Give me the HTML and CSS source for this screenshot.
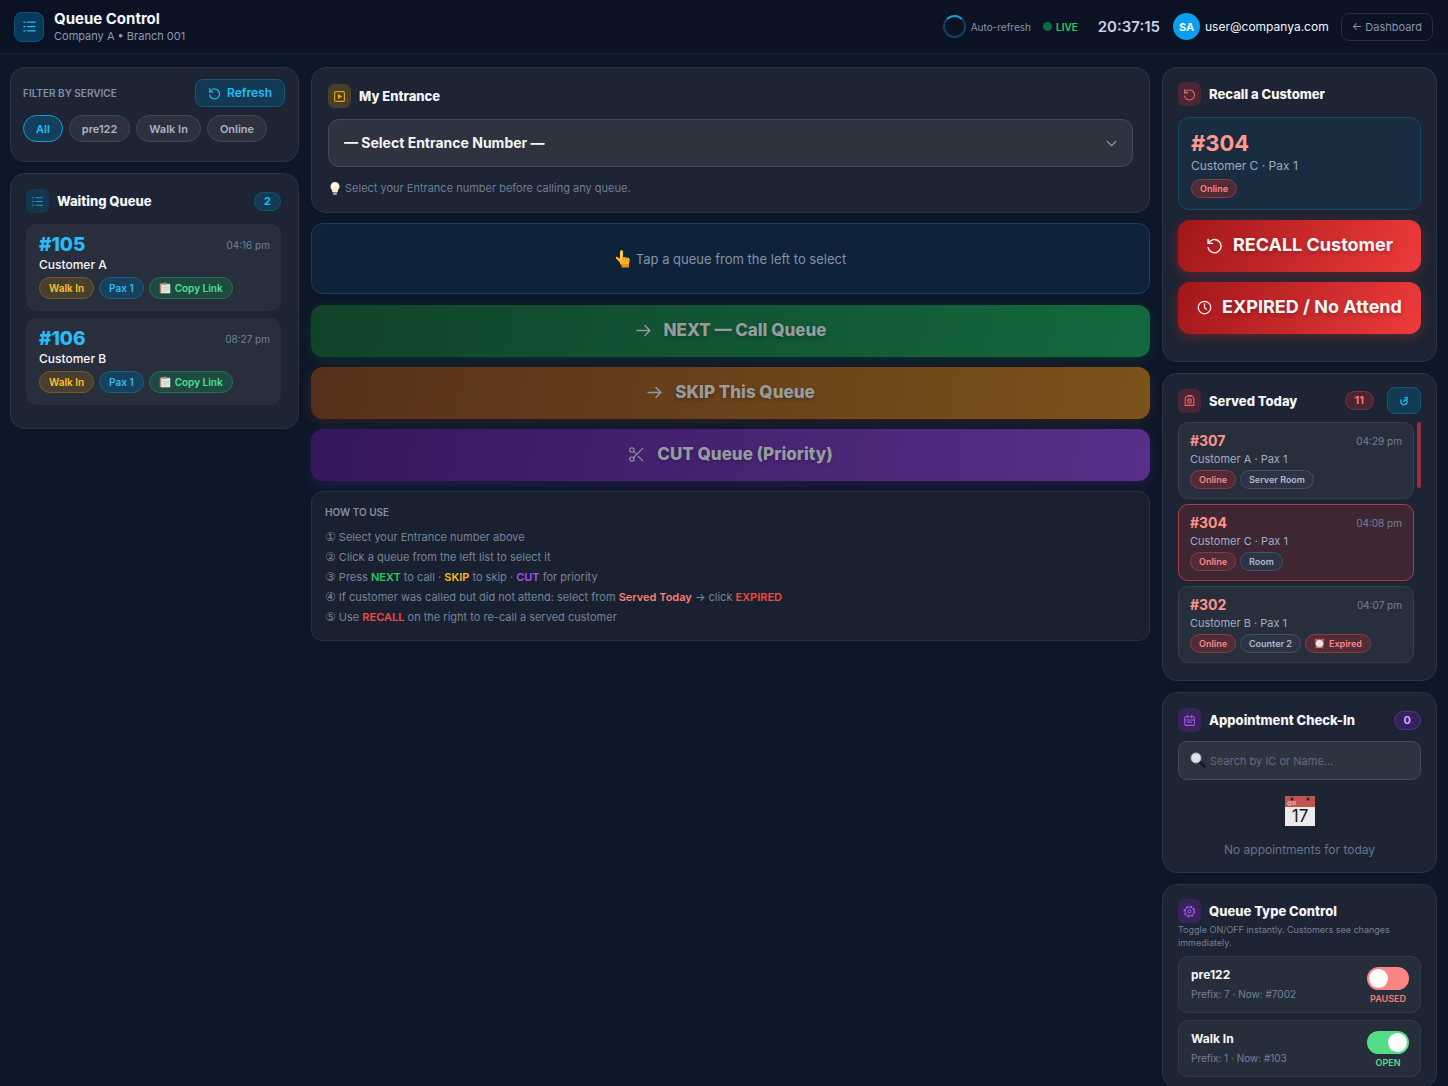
FILE: index.html
```html
<!DOCTYPE html>
<html lang="en">
<head>
<meta charset="utf-8">
<meta name="viewport" content="width=device-width, initial-scale=1">
<title>Queue Control</title>
<link rel="stylesheet" href="styles.css">
</head>
<body>
<svg class="defs" aria-hidden="true">
  <symbol id="i-list" viewBox="0 0 24 24"><path d="M9 5h12M9 12h12M9 19h12M3 5h2M3 12h2M3 19h2"/></symbol>
  <symbol id="i-undo" viewBox="0 0 24 24"><path d="M3 3v6h6"/><path d="M3.500 9a9.300 9.300 0 1 1-.6 6"/></symbol>
  <symbol id="i-arrow" viewBox="0 0 24 24"><path d="M3 12h18M14 5l7 7-7 7"/></symbol>
  <symbol id="i-clock" viewBox="0 0 24 24"><circle cx="12" cy="12" r="10"/><path d="M12 6v6l3 3"/></symbol>
  <symbol id="i-cut" viewBox="0 0 24 24"><circle cx="5.500" cy="5.500" r="3"/><circle cx="5.500" cy="18.500" r="3"/><path d="M21 3 8 16.500M8 7.500l4 4.500M14.500 14.500 21 21"/></symbol>
  <symbol id="i-clip" viewBox="0 0 16 16"><path fill="#b98a6a" d="M1 2h13v13H1z"/><path fill="#dfe9e4" d="M3 3h12v12H3z"/><path fill="#8d9a98" d="M5 1h5v3H5z"/><path stroke="#b9c9c4" d="M5 7h8M5 9.500h8M5 12h6"/></symbol>
</svg>

<header class="topbar">
  <span class="logo"><svg class="icon s15"><use href="#i-list"/></svg></span>
  <div class="brand">
    <h1>Queue Control</h1>
    <p>Company A • Branch 001</p>
  </div>
  <div class="status">
    <span class="spinner"></span>
    <span class="auto">Auto-refresh</span>
    <span class="live">LIVE</span>
    <time class="clock">20:37:15</time>
    <span class="avatar">SA</span>
    <span class="email">user@companya.com</span>
    <a class="back" href="#">← Dashboard</a>
  </div>
</header>

<main class="board">
  <div class="column">
    <section class="card filter">
      <div class="filter-head">
        <h2 class="label">FILTER BY SERVICE</h2>
        <button class="refresh"><svg class="icon s13"><use href="#i-undo"/></svg>Refresh</button>
      </div>
      <div class="chips">
        <button class="chip active">All</button>
        <button class="chip">pre122</button>
        <button class="chip">Walk In</button>
        <button class="chip">Online</button>
      </div>
    </section>

    <section class="card waiting">
      <div class="head">
        <span class="badge blue"><svg class="icon s13"><use href="#i-list"/></svg></span>
        <h2>Waiting Queue</h2>
        <span class="count blue">2</span>
      </div>
      <ul class="stack wide">
        <li class="ticket">
          <div class="row"><strong class="number">#105</strong><time>04:16 pm</time></div>
          <p>Customer A</p>
          <div class="tags"><span class="tag amber">Walk In</span><span class="tag blue">Pax 1</span><button class="tag green"><svg class="emoji"><use href="#i-clip"/></svg>Copy Link</button></div>
        </li>
        <li class="ticket">
          <div class="row"><strong class="number">#106</strong><time>08:27 pm</time></div>
          <p>Customer B</p>
          <div class="tags"><span class="tag amber">Walk In</span><span class="tag blue">Pax 1</span><button class="tag green"><svg class="emoji"><use href="#i-clip"/></svg>Copy Link</button></div>
        </li>
      </ul>
    </section>
  </div>

  <div class="column center">
    <section class="card entrance">
      <div class="head">
        <span class="badge amber"><svg class="icon s13" viewBox="0 0 24 24"><rect x="3" y="3" width="18" height="18" rx="2"/><path fill="currentColor" stroke="none" d="M9 7l8 5-8 5z"/></svg></span>
        <h2><label for="entrance">My Entrance</label></h2>
      </div>
      <div class="select">
        <select id="entrance"><option>— Select Entrance Number —</option></select>
        <svg class="icon s13" viewBox="0 0 24 24"><path d="M4 8l8 8 8-8"/></svg>
      </div>
      <p class="hint"><svg class="bulb" viewBox="0 0 14 16"><path fill="#fff1cf" d="M7 1a5 5 0 0 0-3 8.800V12h6V9.800A5 5 0 0 0 7 1z"/><path fill="#fff" d="M7 2a4 4 0 0 0-3 5 4 4 0 0 1 6-1A4 4 0 0 0 7 2z"/><path fill="#b39a80" d="M5 12h4v3H5z"/></svg>Select your Entrance number before calling any queue.</p>
    </section>

    <div class="prompt">
      <svg class="hand" viewBox="0 0 16 18"><path fill="#fdb827" d="M5 1.500a1.500 1.500 0 0 1 3 0V7l5 .8c1.300.3 1.800 1 1.700 2.200L14 14v1H6L4.500 12 1 8.500C.5 7.500 1.500 6.500 2.500 7L5 8.500z"/><path fill="#ffd55e" d="M5.500 2a1 1 0 0 1 1.500 0v7H5.500z"/><path stroke="#e08b12" fill="none" d="M8 7v3M10.500 8v2M12.500 8.500V11"/><path fill="#f08a1c" d="M6.500 14H14v3.500H6.500z"/></svg>
      Tap a queue from the left to select
    </div>

    <button class="action next" disabled><svg class="icon s17"><use href="#i-arrow"/></svg>NEXT — Call Queue</button>
    <button class="action skip" disabled><svg class="icon s17"><use href="#i-arrow"/></svg>SKIP This Queue</button>
    <button class="action cut" disabled><svg class="icon s17 thin"><use href="#i-cut"/></svg>CUT Queue (Priority)</button>

    <section class="howto">
      <h2 class="label">HOW TO USE</h2>
      <p><span class="step">①</span> Select your Entrance number above</p>
      <p><span class="step">②</span> Click a queue from the left list to select it</p>
      <p><span class="step">③</span> Press <b class="c-green">NEXT</b> to call · <b class="c-amber">SKIP</b> to skip · <b class="c-purple">CUT</b> for priority</p>
      <p><span class="step">④</span> If customer was called but did not attend: select from <b class="c-rose">Served Today</b> → click <b class="c-red">EXPIRED</b></p>
      <p><span class="step">⑤</span> Use <b class="c-red">RECALL</b> on the right to re-call a served customer</p>
    </section>
  </div>

  <div class="column">
    <section class="card recall">
      <div class="head">
        <span class="badge red"><svg class="icon s13"><use href="#i-undo"/></svg></span>
        <h2>Recall a Customer</h2>
      </div>
      <div class="selected">
        <strong>#304</strong>
        <p>Customer C · Pax 1</p>
        <div class="tags"><span class="tag small red">Online</span></div>
      </div>
      <button class="action danger"><svg class="icon s17"><use href="#i-undo"/></svg>RECALL Customer</button>
      <button class="action danger"><svg class="icon s15"><use href="#i-clock"/></svg>EXPIRED / No Attend</button>
    </section>

    <section class="card served">
      <div class="head">
        <span class="badge red"><svg class="icon s13" viewBox="0 0 24 24"><path d="M4 21V8q0-3 4-4h8q4 1 4 4v13zM8 3h8"/><rect x="9" y="9" width="6" height="8" rx="2"/><path d="M11 13h3"/></svg></span>
        <h2>Served Today</h2>
        <span class="count red">11</span>
        <button class="reload" aria-label="Reload served list"><svg class="icon s10" viewBox="0 0 16 16"><path d="M3 6v4q1 4 5 4 5-1 5-5 0-3-3-3L7 9M9 3l4-1v4"/></svg></button>
      </div>
      <div class="scroll">
        <ul class="stack">
          <li class="visit">
            <div class="row"><strong>#307</strong><time>04:29 pm</time></div>
            <p>Customer A · Pax 1</p>
            <div class="tags"><span class="tag small red">Online</span><span class="tag small gray">Server Room</span></div>
          </li>
          <li class="visit current">
            <div class="row"><strong>#304</strong><time>04:08 pm</time></div>
            <p>Customer C · Pax 1</p>
            <div class="tags"><span class="tag small red">Online</span><span class="tag small gray">Room</span></div>
          </li>
          <li class="visit">
            <div class="row"><strong>#302</strong><time>04:07 pm</time></div>
            <p>Customer B · Pax 1</p>
            <div class="tags"><span class="tag small red">Online</span><span class="tag small gray">Counter 2</span><span class="tag small red"><svg class="alarm" viewBox="0 0 12 12"><path stroke="#e2554f" stroke-width="2" d="M1 3l2-2M11 3 9 1M2 11l2-2M10 11 8 9"/><circle cx="6" cy="6" r="4.500" fill="#e9e4e4" stroke="#c9605c"/></svg>Expired</span></div>
          </li>
        </ul>
        <span class="thumb"></span>
      </div>
    </section>

    <section class="card appointments">
      <div class="head">
        <span class="badge purple"><svg class="icon s13" viewBox="0 0 24 24"><rect x="3" y="5" width="18" height="16" rx="2"/><path d="M3 11h18M8 2v5M16 2v5M8 15h8"/></svg></span>
        <h2>Appointment Check-In</h2>
        <span class="count purple">0</span>
      </div>
      <label class="search">
        <svg class="lens" viewBox="0 0 16 16"><path stroke="#15171c" stroke-width="2.500" stroke-linecap="round" d="M10 10l4.500 4.500"/><circle cx="6" cy="6" r="5" fill="#dfe3e8" stroke="#a9afb8"/></svg>
        <input type="search" placeholder="Search by IC or Name..." aria-label="Search by IC or Name">
      </label>
      <div class="empty">
        <svg class="calendar" viewBox="0 0 30 30"><path fill="#ecebea" d="M0 0h30v30H0z"/><path fill="#c25450" d="M0 0h30v11H0z"/><circle cx="7" cy="3" r="1.500" fill="#2a2030"/><circle cx="23" cy="3" r="1.500" fill="#2a2030"/><path stroke="#e7c4c2" fill="none" d="M3 9V6h3v3zM8 9V5M10 9V5"/><text x="15" y="26" text-anchor="middle">17</text></svg>
        <p>No appointments for today</p>
      </div>
    </section>

    <section class="card control">
      <div class="head">
        <span class="badge purple"><svg class="icon s13" viewBox="0 0 24 24"><circle cx="12" cy="12" r="3"/><circle cx="12" cy="12" r="8"/><circle cx="12" cy="12" r="10" stroke-dasharray="3 4.850"/></svg></span>
        <h2>Queue Type Control</h2>
      </div>
      <p class="note">Toggle ON/OFF instantly. Customers see changes immediately.</p>
      <ul class="stack wide">
        <li class="type">
          <div><label for="t-pre">pre122</label><p>Prefix: 7 · Now: #7002</p></div>
          <div class="toggle"><input type="checkbox" id="t-pre"><span class="c-rose">PAUSED</span></div>
        </li>
        <li class="type">
          <div><label for="t-walk">Walk In</label><p>Prefix: 1 · Now: #103</p></div>
          <div class="toggle"><input type="checkbox" id="t-walk" checked><span class="c-mint">OPEN</span></div>
        </li>
      </ul>
    </section>
  </div>
</main>
</body>
</html>
```
FILE: styles.css
```css
* { box-sizing: border-box; }

body {
  margin: 0;
  height: 100vh;
  display: flex;
  flex-direction: column;
  overflow: hidden;
  background: #0d1729;
  color: #f4f6fa;
  font: 12px/16px Inter, "Open Sans", sans-serif;
}

h1, h2, p, ul { margin: 0; padding: 0; }
ul { list-style: none; }
button, select, input { font: inherit; color: inherit; margin: 0; }
button { cursor: pointer; border: 1px solid transparent; }
.defs { position: absolute; width: 0; height: 0; }

.icon {
  flex: none;
  fill: none;
  stroke: currentColor;
  stroke-width: 2;
  stroke-linecap: round;
  stroke-linejoin: round;
}
.s10 { width: 10px; height: 10px; }
.s13 { width: 13px; height: 13px; }
.s15 { width: 15px; height: 15px; }
.s17 { width: 17px; height: 17px; }
.thin { stroke-width: 1.5; }

/* Top bar */
.topbar {
  flex: none;
  display: flex;
  align-items: center;
  height: 54px;
  padding: 0 15px 0 14px;
  background: #0a1223;
  border-bottom: 1px solid #10253c;
}
.logo {
  display: grid;
  place-items: center;
  width: 30px;
  height: 30px;
  margin-right: 10px;
  border: 1px solid #0f557c;
  border-radius: 8px;
  background: #07395a;
  color: #22bdf5;
}
.brand h1 { font-size: 15px; line-height: 18px; font-weight: 700; }
.brand p { font-size: 11px; line-height: 16px; color: #8c9ab1; }
.status { display: flex; align-items: center; margin-left: auto; }
.spinner {
  width: 23px;
  height: 23px;
  margin-right: 5px;
  border: 2px solid #0c4267;
  border-top-color: #1c9fd8;
  border-radius: 50%;
}
.auto { font-size: 10px; color: #8794aa; }
.live {
  display: flex;
  align-items: center;
  gap: 4px;
  margin: 0 20px 0 12px;
  font-size: 10px;
  font-weight: 600;
  color: #22d566;
}
.live::before { content: ""; width: 9px; height: 9px; border-radius: 50%; background: #106b3c; }
.clock { font-size: 15px; font-weight: 600; color: #c8d2e6; }
.avatar {
  display: grid;
  place-items: center;
  width: 27px;
  height: 27px;
  margin: 0 5px 0 13px;
  border-radius: 50%;
  background: #08a0ea;
  font-size: 11px;
  font-weight: 700;
}
.back {
  margin-left: 12px;
  padding: 5px 10px;
  border: 1px solid #262e40;
  border-radius: 8px;
  font-size: 11px;
  color: #8996ab;
  text-decoration: none;
}

/* Board columns */
.board {
  flex: 1;
  min-height: 0;
  display: grid;
  grid-template-columns: 289px minmax(0, 1fr) 275px;
  gap: 12px;
  padding: 13px 11px 0 10px;
}
.column { display: flex; flex-direction: column; gap: 11px; }
.column > * { flex: none; }
.center { gap: 10px; }

.card {
  border: 1px solid #2c3444;
  border-radius: 15px;
  padding: 15px 16px;
  background: #1d2433;
}
.head { display: flex; align-items: center; gap: 8px; }
.head h2 { flex: 1; font-size: 13px; line-height: 18px; font-weight: 800; }
.badge {
  display: grid;
  place-items: center;
  width: 23px;
  height: 24px;
  border-radius: 6px;
}
.badge.blue { background: #14374f; color: #1c9ccc; }
.badge.amber { background: #493c29; color: #e0a912; }
.badge.red { background: #4a2533; color: #ee6460; }
.badge.purple { background: #39235b; color: #9a55e8; }

.count {
  padding: 0 9px;
  border: 1px solid;
  border-radius: 10px;
  font-size: 11px;
  line-height: 17px;
  font-weight: 700;
}
.count.blue { background: #123b56; border-color: #145173; color: #27bdf5; }
.count.red { background: #482633; border-color: #7d2f3a; color: #fa7470; }
.count.purple { background: #36205e; border-color: #51308a; color: #d5aaff; }

.label { font-size: 10px; line-height: 16px; font-weight: 600; color: #8190a7; }

/* Filter */
.filter { padding: 11px 13px 19px 12px; }
.filter-head { display: flex; align-items: center; justify-content: space-between; }
.refresh {
  display: flex;
  align-items: center;
  gap: 6px;
  height: 28px;
  padding: 0 12px;
  border-color: #12567a;
  border-radius: 8px;
  background: #133a54;
  color: #27bdf5;
  font-weight: 600;
}
.chips { display: flex; gap: 6px; margin-top: 8px; }
.chip {
  height: 27px;
  padding: 0 12px;
  border-color: #414653;
  border-radius: 14px;
  background: #2d313d;
  color: #a9b4c7;
  font-size: 11px;
  font-weight: 600;
}
.chip.active { border-color: #1b9cd4; background: #12405d; color: #26bdf7; }

/* Tickets */
.stack { display: flex; flex-direction: column; gap: 5px; }
.stack.wide { gap: 7px; }
.row { display: flex; justify-content: space-between; align-items: center; }
.row time { font-size: 10px; color: #728097; }
.waiting { padding: 15px 17px 23px 15px; }
.waiting .head { padding-bottom: 11px; }
.ticket {
  height: 87px;
  padding: 10px 11px 0 13px;
  border-radius: 10px;
  background: #282e3b;
}
.number { font-size: 19px; line-height: 22px; font-weight: 800; color: #28bdfa; }
.ticket p { font-weight: 500; line-height: 18px; }

.tags { display: flex; gap: 5px; }
.tag {
  display: inline-flex;
  align-items: center;
  gap: 4px;
  height: 22px;
  margin-top: 3px;
  padding: 0 9px;
  border: 1px solid;
  border-radius: 11px;
  font-size: 10px;
  font-weight: 600;
}
.tag.small { height: 19px; margin-top: 2px; padding: 0 8px; font-size: 9px; }
.tag.amber { background: #48402f; border-color: #775822; color: #fcc127; }
.tag.blue { background: #17415d; border-color: #166088; color: #30bcf7; }
.tag.green { background: #1f4a42; border-color: #267052; color: #4be291; }
.tag.red { background: #512b37; border-color: #883b42; color: #fc8882; }
.tag.gray { background: #2d3545; border-color: #445064; color: #afbbcd; }
.emoji { width: 12px; height: 12px; }
.alarm { width: 11px; height: 11px; }

/* Entrance */
.entrance { padding-top: 16px; padding-bottom: 16px; }
.select { position: relative; margin-top: 11px; }
.select select {
  appearance: none;
  display: block;
  width: 100%;
  height: 48px;
  padding: 0 15px;
  border: 1px solid #424957;
  border-radius: 11px;
  background: #2d333f;
  font-size: 14px;
  font-weight: 700;
}
.select .icon { position: absolute; right: 15px; top: 18px; color: #9ca5b4; pointer-events: none; }
.hint { display: flex; align-items: center; gap: 3px; margin-top: 13px; font-size: 11px; color: #6d7d95; }
.bulb { width: 14px; height: 15px; }

.prompt {
  display: flex;
  align-items: center;
  justify-content: center;
  gap: 5px;
  height: 71px;
  margin-bottom: 1px;
  border: 1px solid #123f61;
  border-radius: 12px;
  background: #0e2239;
  color: #8293aa;
  font-size: 13px;
}
.hand { width: 16px; height: 18px; }

.action {
  display: flex;
  align-items: center;
  justify-content: center;
  gap: 12px;
  width: 100%;
  height: 52px;
  padding: 0 0 2px;
  border: 0;
  border-radius: 12px;
  font-size: 17px;
  font-weight: 800;
  text-shadow: 0 2px 4px #0004;
}
.action:disabled { color: #959c9e; cursor: default; }
.next { background: linear-gradient(100deg, #114329, #13693e); box-shadow: 0 3px 12px #12643c55; }
.skip { background: linear-gradient(100deg, #58301a, #7c531a); box-shadow: 0 3px 12px #7a4a1a44; }
.cut { background: linear-gradient(100deg, #35175b, #58308a); box-shadow: 0 3px 12px #50288a55; }
.danger {
  gap: 10px;
  margin-top: 10px;
  background: linear-gradient(115deg, #a11719, #ee3b3c);
  box-shadow: 0 3px 12px #d8303055;
  font-size: 18px;
  font-weight: 700;
}

.howto {
  padding: 12px 13px 13px;
  border: 1px solid #272f41;
  border-radius: 11px;
  background: #192131;
  color: #75849a;
  font-size: 11px;
}
.howto .label { margin-bottom: 7px; }
.howto p { line-height: 20px; }
.howto b { font-weight: 600; }
.step { font-family: "DejaVu Sans", sans-serif; font-size: 12px; line-height: 1; }
.c-green { color: #25c966; }
.c-amber { color: #f6bd19; }
.c-purple { color: #a354ec; }
.c-rose { color: #fa7d76; }
.c-red { color: #f34742; }
.c-mint { color: #55df87; }

/* Recall */
.recall { padding: 14px 15px 27px; }
.selected {
  height: 93px;
  margin-top: 11px;
  padding: 13px 12px 0;
  border: 1px solid #144666;
  border-radius: 11px;
  background: #1a2c40;
}
.selected strong { display: block; font-size: 22px; line-height: 24px; font-weight: 700; color: #ff9992; }
.selected p { line-height: 22px; color: #9dabbf; }

/* Served */
.served { padding: 13px 15px 17px; }
.served .count { margin-right: 5px; }
.reload {
  display: grid;
  place-items: center;
  width: 34px;
  height: 27px;
  padding: 0;
  border-color: #12567a;
  border-radius: 8px;
  background: #133a54;
  color: #20bdf2;
}
.scroll { display: flex; gap: 3px; margin-top: 8px; }
.scroll .stack { flex: 1; }
.scroll .tags { gap: 4px; }
.thumb { width: 4px; height: 66px; border-radius: 2px; background: #96313c; }
.visit {
  height: 77px;
  padding: 9px 11px 0;
  border: 1px solid #353d4b;
  border-radius: 10px;
  background: #282f3c;
}
.visit.current { border-color: #b03c41; background: #3e2733; }
.visit strong { font-size: 14px; line-height: 18px; font-weight: 700; color: #ff938b; }
.visit p { font-size: 11px; line-height: 18px; color: #a2aec1; }

/* Appointments */
.appointments { padding: 15px 15px 14px; }
.search { position: relative; display: block; margin-top: 9px; }
.search input {
  display: block;
  width: 100%;
  height: 39px;
  padding: 0 12px 0 31px;
  border: 1px solid #434a58;
  border-radius: 9px;
  background: #2d333f;
  font-size: 11px;
}
.search input::placeholder { color: #5f6d83; opacity: 1; }
.lens { position: absolute; left: 12px; top: 11px; width: 16px; height: 16px; }
.empty { display: flex; flex-direction: column; align-items: center; gap: 16px; padding-top: 16px; color: #66758c; }
.calendar { width: 30px; height: 30px; }
.calendar text { font-size: 17px; fill: #17191d; }

/* Queue types */
.control { padding: 14px 15px 10px; }
.note { margin: 0 0 7px; font-size: 9px; line-height: 13px; color: #738198; }
.type {
  display: flex;
  align-items: center;
  justify-content: space-between;
  height: 57px;
  padding: 0 11px 0 12px;
  border: 1px solid #333b49;
  border-radius: 10px;
  background: #272e3b;
}
.type label { font-weight: 700; }
.type p { margin-top: 3px; font-size: 10px; color: #738198; }
.toggle { display: flex; flex-direction: column; align-items: center; font-size: 9px; line-height: 13px; font-weight: 600; }
.toggle input {
  appearance: none;
  display: flex;
  width: 42px;
  height: 23px;
  margin: 2px 0;
  padding: 2px;
  border-radius: 12px;
  background: #fb8585;
}
.toggle input::before { content: ""; width: 19px; height: 19px; border-radius: 50%; background: #fff; }
.toggle input:checked { justify-content: flex-end; background: #55dc86; }
```
